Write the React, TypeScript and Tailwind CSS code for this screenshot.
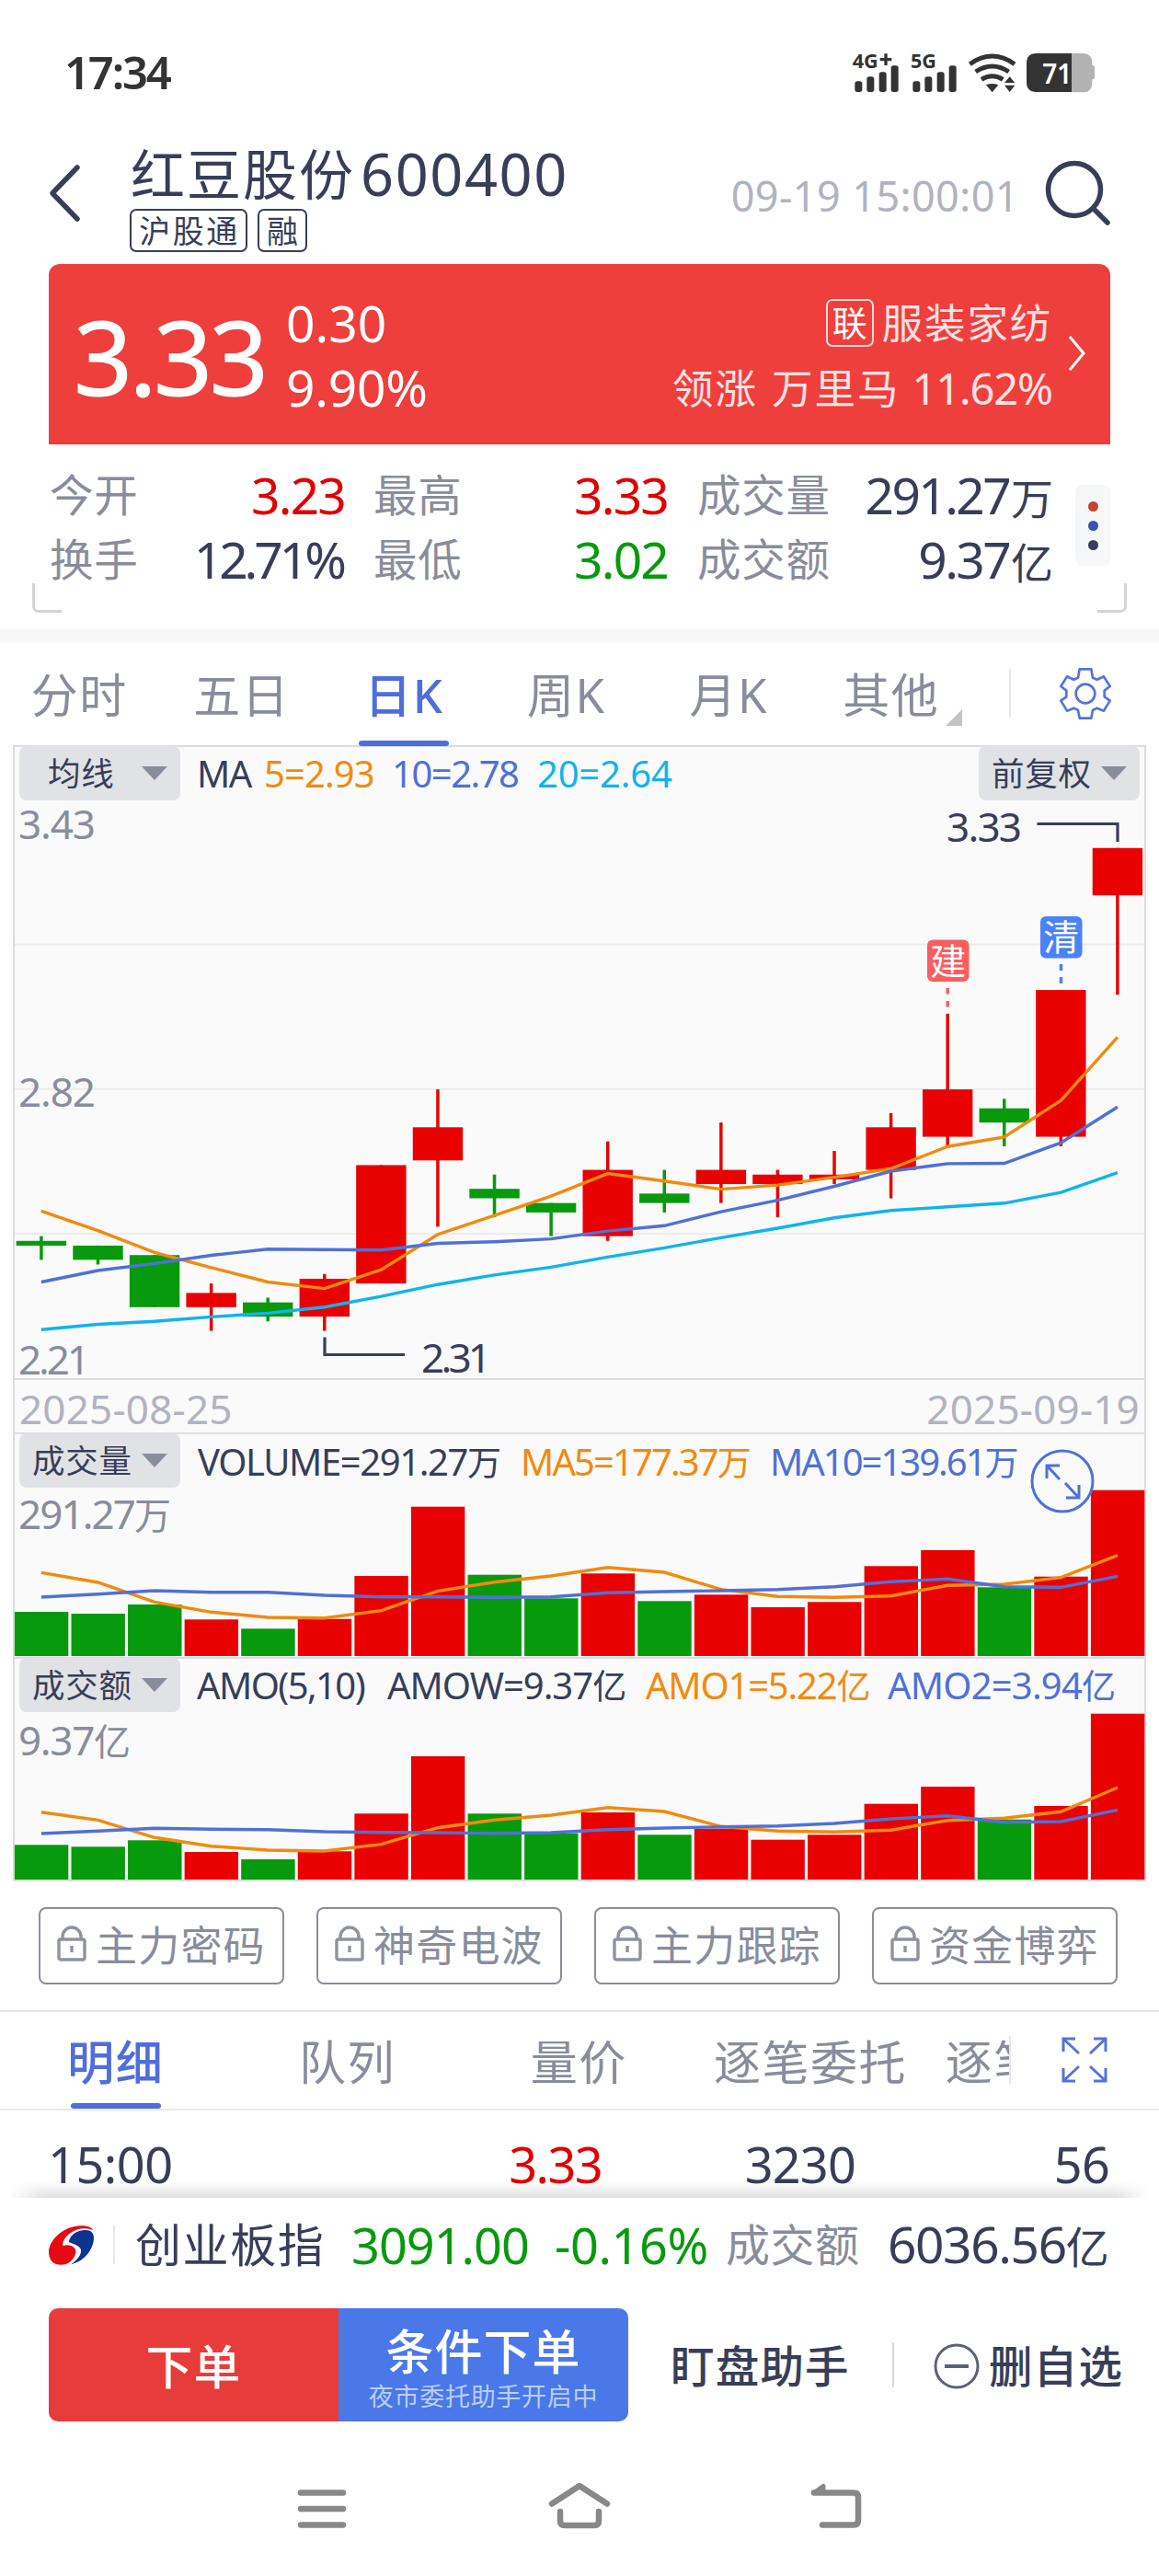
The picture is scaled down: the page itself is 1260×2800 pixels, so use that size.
import type React from "react"
import clsx from "clsx"

const PITCH = 61.58
const FIRST_X = 44.9

const xAt = (i: number) => FIRST_X + i * PITCH
const yAt = (price: number) => 870.3 + (3.43 - price) * 514.5

// open/close band, then high and low
type Candle = { up: boolean; top: number; bottom: number; high: number; low: number }

const candles: Candle[] = [
  { up: false, top: 2.5, bottom: 2.49, high: 2.51, low: 2.46 },
  { up: false, top: 2.49, bottom: 2.46, high: 2.49, low: 2.45 },
  { up: false, top: 2.47, bottom: 2.36, high: 2.47, low: 2.36 },
  { up: true, top: 2.39, bottom: 2.36, high: 2.41, low: 2.31 },
  { up: false, top: 2.37, bottom: 2.34, high: 2.38, low: 2.33 },
  { up: true, top: 2.42, bottom: 2.34, high: 2.43, low: 2.31 },
  { up: true, top: 2.66, bottom: 2.41, high: 2.66, low: 2.41 },
  { up: true, top: 2.74, bottom: 2.67, high: 2.82, low: 2.53 },
  { up: false, top: 2.61, bottom: 2.59, high: 2.64, low: 2.55 },
  { up: false, top: 2.58, bottom: 2.56, high: 2.58, low: 2.51 },
  { up: true, top: 2.65, bottom: 2.51, high: 2.71, low: 2.5 },
  { up: false, top: 2.6, bottom: 2.58, high: 2.65, low: 2.56 },
  { up: true, top: 2.65, bottom: 2.62, high: 2.75, low: 2.58 },
  { up: true, top: 2.64, bottom: 2.62, high: 2.65, low: 2.55 },
  { up: true, top: 2.64, bottom: 2.63, high: 2.69, low: 2.62 },
  { up: true, top: 2.74, bottom: 2.65, high: 2.77, low: 2.59 },
  { up: true, top: 2.82, bottom: 2.72, high: 2.98, low: 2.7 },
  { up: false, top: 2.78, bottom: 2.75, high: 2.8, low: 2.7 },
  { up: true, top: 3.03, bottom: 2.72, high: 3.03, low: 2.7 },
  { up: true, top: 3.33, bottom: 3.23, high: 3.33, low: 3.02 },
]

const ma5 = [1316.3, 1337.7, 1361.3, 1377.9, 1393.5, 1400.6, 1380.1, 1341.7, 1321.2, 1300.2, 1275.6, 1283.7, 1292.6, 1288.1, 1279.6, 1270.3, 1246.2, 1235.9, 1196.2, 1127.4]
const ma10 = [1393.5, 1381, 1373.4, 1364.5, 1357.8, 1358.2, 1358.7, 1351.5, 1349.7, 1346.6, 1338.1, 1332.3, 1317.1, 1304.6, 1289.5, 1273, 1264.9, 1264.5, 1242.1, 1203.3]
const ma20 = [1445.3, 1439.5, 1436.3, 1431.4, 1427.4, 1420.7, 1409.1, 1396.2, 1385.9, 1377.4, 1366.3, 1356.4, 1345.3, 1335, 1323.8, 1315.8, 1311.8, 1307.8, 1296.2, 1274.7]

const volumeTops = [1752, 1754, 1744, 1760.3, 1770.3, 1759.7, 1713, 1637.7, 1711.7, 1737.3, 1710.3, 1740.3, 1733.3, 1747, 1741.3, 1702.3, 1685, 1725.3, 1713.7, 1619.7]
const volumeMa5 = [1709.3, 1720, 1741.3, 1752.3, 1758, 1758.7, 1750.7, 1729.3, 1719.7, 1713, 1703.7, 1709, 1727.7, 1735.3, 1736.3, 1734.7, 1723.3, 1722, 1714.7, 1690.7]
const volumeMa10 = [1736, 1732.7, 1729, 1730.7, 1730.7, 1734, 1735.7, 1735.7, 1736.3, 1735.7, 1731.3, 1730, 1729, 1727.7, 1724.7, 1719.3, 1716.3, 1724.7, 1725.3, 1713.3]

const amountTops = [2005.3, 2007.3, 2000.3, 2013, 2021, 2012.3, 1971.3, 1909, 1971.3, 1992.7, 1970, 1994.3, 1987.7, 1999.7, 1994.3, 1960.7, 1942, 1977.7, 1963, 1862.7]
const amountMa5 = [1969.7, 1978.3, 1997.3, 2006.7, 2011, 2012, 2004.7, 1986.7, 1978.3, 1973, 1964.7, 1969, 1985.3, 1990.3, 1991.3, 1989.3, 1978.7, 1976.3, 1969.3, 1943]
const amountMa10 = [1993, 1990.3, 1987.3, 1988.3, 1988.7, 1991, 1991.7, 1992, 1992.7, 1992, 1988.7, 1987, 1985.7, 1984.7, 1982, 1977, 1973.7, 1980.7, 1980, 1967.3]

const RED = "#e90000"
const GREEN = "#079a0c"
const ORANGE = "#f28a0e"
const BLUE = "#5070d8"
const CYAN = "#10b4ec"

function Line({ data, color }: { data: number[]; color: string }) {
  return (
    <polyline
      points={data.map((y, i) => `${xAt(i)},${y}`).join(" ")}
      fill="none"
      stroke={color}
      strokeWidth="3.4"
    />
  )
}

function StatusBar() {
  return (
    <div className="h-[157px] pl-[70px] pr-[50px] flex items-center justify-between text-[#333]">
      <span className="text-[49px] leading-[60px] font-semibold tracking-[-2.2px] -mt-[2px]">17:34</span>
      <svg width="300" height="65" viewBox="0 0 900 195" fill="#333" fontWeight="700">
        <text x="50" y="84" fontSize="62" textLength="84" lengthAdjust="spacingAndGlyphs">4G</text>
        <path d="M140 56h38M159 37v38" stroke="#333" strokeWidth="10" />
        <text x="240" y="84" fontSize="62" textLength="84" lengthAdjust="spacingAndGlyphs">5G</text>
        {[58, 247].map((x) => (
          <g key={x}>
            <rect x={x} y="127" width="24" height="35" rx="8" />
            <rect x={x + 39} y="112" width="24" height="50" rx="8" />
            <rect x={x + 79} y="97" width="24" height="65" rx="8" />
            <rect x={x + 118} y="76" width="24" height="86" rx="8" />
          </g>
        ))}
        <g fill="none" stroke="#333" strokeWidth="15">
          <path d="M433 71Q506 19 579 71" />
          <path d="M452 96Q506 60 560 96" />
          <path d="M471 121Q506 99 541 121" />
        </g>
        <path d="M486 139q20-8 40 0l-20 24z" />
        <path d="M563 112l17 20h-34zM563 162l17-22h-34z" />
        <path d="M765 36h35q32 0 32 32v7q8 0 8 8v30q0 8-8 8v10q0 32-32 32h-35z" fill="#b2b2b2" />
        <path d="M765 36H650q-32 0-32 32v62q0 32 32 32h115z" />
        <text x="670" y="135" fontSize="94" fontWeight="600" fill="#fff" textLength="96" lengthAdjust="spacingAndGlyphs">71</text>
      </svg>
    </div>
  )
}

function Header() {
  return (
    <div className="h-[130px] pl-[52px] pr-[50px] flex items-start">
      <svg width="38" height="66" viewBox="0 0 38 66" className="mt-5" fill="none" stroke="#383e58" strokeWidth="5.5" strokeLinecap="round" strokeLinejoin="round">
        <path d="M32 5L5 33l27 28" />
      </svg>
      <div className="ml-[52px]">
        <div className="h-[70px] flex items-center leading-[64px] text-[#383e58] -mt-[3px]">
          <span className="text-[59px] tracking-[2px]">红豆股份</span>
          <span className="text-[63px] tracking-[1.6px] ml-[6px]">600400</span>
        </div>
        <div className="flex gap-[11px] mt-[3px] -ml-px text-[34px] leading-[45px] text-[#383e58]">
          <span className="w-[128px] h-[47px] border-2 border-[#383e58] rounded-[7px] text-center tracking-[2.5px] pl-[2px]">沪股通</span>
          <span className="w-[54px] h-[47px] border-2 border-[#383e58] rounded-[7px] text-center">融</span>
        </div>
      </div>
      <div className="ml-auto flex pt-4">
        <span className="text-[45px] leading-[80px] tracking-[0.4px] text-[#b1b3be] mr-[26px]">09-19 15:00:01</span>
        <svg width="76" height="76" viewBox="0 0 76 76" fill="none" stroke="#383e58" strokeWidth="5.5" strokeLinecap="round">
          <circle cx="34" cy="33" r="28.5" />
          <path d="M55 54l15 15" />
        </svg>
      </div>
    </div>
  )
}

function PriceCard() {
  return (
    <div className="mx-[53px] h-[196px] bg-[#ee3f3d] rounded-t-[12px] text-white flex pl-[27px]">
      <span className="text-[112px] leading-[200px] tracking-[-3.5px] w-[231px] [-webkit-text-stroke:1px_white]">3.33</span>
      <div className="pt-[29px] text-[55px] leading-[70px]">
        <div>0.30</div>
        <div className="tracking-[-0.2px]">9.90%</div>
      </div>
      <div className="ml-auto pt-[29px] text-right text-white/85">
        <div className="flex items-center justify-end h-[70px]">
          <span className="w-[52px] h-[52px] border-2 border-white/80 rounded-[7px] text-[38px] leading-[47px] text-center text-white mr-[9px]">联</span>
          <span className="text-[44.5px] tracking-[1.8px] leading-[70px]">服装家纺</span>
        </div>
        <div className="flex justify-end leading-[72px] text-[44.5px]">
          <span className="tracking-[2px] mr-[15px]">领涨</span>
          <span className="tracking-[2px] mr-[13px]">万里马</span>
          <span className="text-[47px] tracking-[-1.1px]">11.62%</span>
        </div>
      </div>
      <svg width="20" height="40" viewBox="0 0 20 40" className="mt-[77px] ml-[17px] mr-[26px]" fill="none" stroke="#fff" strokeWidth="3">
        <path d="M2 2l15 18L2 38" />
      </svg>
    </div>
  )
}

type StatProps = {
  label: string
  value: string
  unit?: string
  valueClass?: string
  labelWidth: string
  valueWidth: string
}

function Stat({ label, value, unit, valueClass = "text-[#383e58] tracking-[-2.6px]", labelWidth, valueWidth }: StatProps) {
  return (
    <div className="flex h-[70px] leading-[70px]">
      <span className={clsx("text-[47.5px] tracking-[0.8px] text-[#898d9b]", labelWidth)}>{label}</span>
      <span className={clsx("text-right text-[55px]", valueClass, valueWidth)}>
        {value}
        {unit && <span className="text-[46px] ml-[2px] tracking-normal">{unit}</span>}
      </span>
    </div>
  )
}

function Stats() {
  return (
    <div className="h-[201px] relative pl-[54px] pr-[53px] pt-[20px] flex">
      <div>
        <Stat label="今开" value="3.23" valueClass="text-[#e00000] tracking-[-1.8px]" labelWidth="w-[122px]" valueWidth="w-[199px]" />
        <Stat label="换手" value="12.71%" valueClass="text-[#383e58] tracking-[-4px]" labelWidth="w-[122px]" valueWidth="w-[197px]" />
      </div>
      <div className="absolute left-[406px] top-[20px]">
        <Stat label="最高" value="3.33" valueClass="text-[#e00000] tracking-[-1.8px]" labelWidth="w-[120px]" valueWidth="w-[200px]" />
        <Stat label="最低" value="3.02" valueClass="text-[#079a0c] tracking-[-1.8px]" labelWidth="w-[120px]" valueWidth="w-[200px]" />
      </div>
      <div className="absolute left-[758px] top-[20px]">
        <Stat label="成交量" value="291.27" unit="万" labelWidth="w-[150px]" valueWidth="w-[237px]" />
        <Stat label="成交额" value="9.37" unit="亿" labelWidth="w-[150px]" valueWidth="w-[237px]" />
      </div>
      <div className="ml-auto mt-[24px] w-[38px] h-[88px] rounded-[8px] bg-[#f5f7f8] flex flex-col items-center justify-center gap-[10px]">
        <i className="size-[11px] rounded-full bg-[#c4432e]" />
        <i className="size-[11px] rounded-full bg-[#3a52b5]" />
        <i className="size-[11px] rounded-full bg-[#3a405c]" />
      </div>
      <i className="absolute left-[35px] top-[151px] w-[32px] h-[32px] border-l-3 border-b-3 border-[#d4d4da] rounded-bl-[7px]" />
      <i className="absolute right-[35px] top-[151px] w-[32px] h-[32px] border-r-3 border-b-3 border-[#d4d4da] rounded-br-[7px]" />
    </div>
  )
}

const periods = ["分时", "五日", "日K", "周K", "月K", "其他"]

function PeriodTabs() {
  return (
    <div className="h-[112px] flex pr-[52px]">
      <div className="w-[1059px] -ml-[2px] grid grid-cols-6">
        {periods.map((name) => {
          const active = name === "日K"
          return (
            <div
              key={name}
              className={clsx(
                "relative text-center text-[51px] leading-[114px] tracking-[1.5px]",
                active ? "text-[#4f6edc] font-medium" : "text-[#898d9b]",
              )}
            >
              {name}
              {active && <i className="absolute bottom-px left-[39px] w-[98px] h-[6px] rounded-[3px] bg-[#4f6edc]" />}
              {name === "其他" && (
                <svg width="18" height="18" className="absolute left-[147px] top-[73px]" fill="#c3c3c3">
                  <path d="M18 0v18H0z" />
                </svg>
              )}
            </div>
          )
        })}
      </div>
      <i className="w-[2px] h-[53px] bg-[#e8e8e8] mt-[29px] ml-[40px]" />
      <svg width="56" height="56" viewBox="0 0 168 168" className="ml-auto mt-[28px]" fill="none" stroke="#5573dc" strokeWidth="8" strokeLinejoin="round">
        <path d="M65 4H103L108 32L122 38L144 28L164 60L146 74V94L164 107L144 140L122 131L108 138L103 164H65L60 138L46 131L24 140L4 107L22 94V74L4 60L24 28L46 38L60 32Z" />
        <circle cx="84" cy="84" r="31" />
      </svg>
    </div>
  )
}

function Picker({ children, className }: { children: string; className: string }) {
  return (
    <div className={clsx("w-[175px] h-[59px] -mt-px rounded-[8px] bg-[#e1e2e6] flex items-center text-[35.5px] leading-[59px] tracking-[0.8px] text-[#383e58]", className)}>
      {children}
      <svg width="28" height="15" className="ml-auto" fill="#898d9b">
        <path d="M0 0h28L14 15z" />
      </svg>
    </div>
  )
}

type LegendProps = { className: string; unit?: string; children: string }

function Legend({ className, unit, children }: LegendProps) {
  return (
    <span className={clsx("shrink-0 whitespace-nowrap text-[40px] leading-[57px]", className)}>
      {children}
      {unit && <span className="text-[37px]">{unit}</span>}
    </span>
  )
}

function PriceChart() {
  return (
    <svg width="1228" height="628" viewBox="16 870 1228 628" className="block overflow-visible">
      {[1026.5, 1183.8, 1341].map((y) => (
        <path key={y} d={`M16 ${y}H1244`} stroke="#ececee" strokeWidth="2" />
      ))}
      <g fontSize="44" fill="#898d9b">
        <text x="20" y="912" textLength="84">3.43</text>
        <text x="20" y="1203" textLength="84">2.82</text>
        <text x="20" y="1494" textLength="78">2.21</text>
      </g>
      {candles.map((c, i) => (
        <g key={i} fill={c.up ? RED : GREEN}>
          <rect x={xAt(i) - 27.2} y={yAt(c.top)} width="54.4" height={yAt(c.bottom) - yAt(c.top)} />
          <rect x={xAt(i) - 1.75} y={yAt(c.high)} width="3.5" height={yAt(c.low) - yAt(c.high)} />
        </g>
      ))}
      <Line data={ma20} color={CYAN} />
      <Line data={ma5} color={ORANGE} />
      <Line data={ma10} color={BLUE} />

      {/* highest and lowest price in view */}
      <g fill="none" stroke="#383e58" strokeWidth="3.2">
        <path d="M1127.5 895.5H1215V915" />
        <path d="M353 1453.5V1472.5H440" />
      </g>
      <g fontSize="44" fill="#383e58">
        <text x="1029" y="914.5" textLength="82">3.33</text>
        <text x="458" y="1491.5" textLength="76">2.31</text>
      </g>

      {/* open / close position markers */}
      <rect x="1008" y="1021.5" width="45.5" height="45.5" rx="6" fill="#fa5e5e" />
      <text x="1030.7" y="1058.5" fontSize="39" fill="#fff" textAnchor="middle">建</text>
      <path d="M1030.3 1074v6.5M1030.3 1088v6.5" stroke="#fa5e5e" strokeWidth="3.5" />
      <rect x="1131" y="996" width="45.5" height="45.5" rx="6" fill="#4b82f8" />
      <text x="1153.7" y="1033" fontSize="39" fill="#fff" textAnchor="middle">清</text>
      <path d="M1153.5 1048v7M1153.5 1062v7" stroke="#4b82f8" strokeWidth="3.5" />
    </svg>
  )
}

type BarChartProps = {
  top: number
  height: number
  base: number
  bars: number[]
  fast: number[]
  slow: number[]
  children: React.ReactNode
}

function BarChart({ top, height, base, bars, fast, slow, children }: BarChartProps) {
  return (
    <svg width="1228" height={height} viewBox={`16 ${top} 1228 ${height}`} className="block overflow-visible">
      {children}
      {bars.map((y, i) => (
        <rect key={i} x={xAt(i) - 29} y={y} width="58.4" height={base - y} fill={candles[i].up ? RED : GREEN} />
      ))}
      <Line data={fast} color={ORANGE} />
      <Line data={slow} color={BLUE} />
    </svg>
  )
}

function Charts() {
  return (
    <div className="mx-[14px] bg-[#fafafa] border-2 border-[#dcdce1]">
      <div className="h-[58px] flex pl-[5px] pr-[5px]">
        <Picker className="pl-[31px] pr-[14px]">均线</Picker>
        <Legend className="ml-[18px] w-[73px] tracking-[-1.5px] text-[#383e58]">MA</Legend>
        <Legend className="w-[139px] tracking-[-0.9px] text-[#f28a0e]">5=2.93</Legend>
        <Legend className="w-[158px] tracking-[-1.5px] text-[#5070d8]">10=2.78</Legend>
        <Legend className="tracking-[-0.2px] text-[#10b4ec]">20=2.64</Legend>
        <Picker className="ml-auto pl-[14px] pr-[14px]">前复权</Picker>
      </div>
      <PriceChart />
      <div className="h-[59px] border-t-2 border-[#dcdce1] flex justify-between px-[5px] text-[44px] leading-[63px] tracking-[0.2px] text-[#b1b3be]">
        <span>2025-08-25</span>
        <span>2025-09-19</span>
      </div>

      <div className="relative h-[62px] border-t-2 border-[#dcdce1] flex pl-[5px]">
        <Picker className="pl-[14px] pr-[14px]">成交量</Picker>
        <Legend className="ml-[19px] w-[351px] pt-px tracking-[-1.4px] text-[#383e58]" unit="万">VOLUME=291.27</Legend>
        <Legend className="w-[271px] pt-px tracking-[-1.9px] text-[#f28a0e]" unit="万">MA5=177.37</Legend>
        <Legend className="pt-px tracking-[-2px] text-[#5070d8]" unit="万">MA10=139.61</Legend>
        <svg width="70" height="70" viewBox="0 0 70 70" className="absolute left-[1104px] top-[16px]" fill="none" stroke="#5070d8" strokeWidth="3">
          <circle cx="35" cy="35" r="33" />
          <path d="M32 33L19 19M18 32V18h14M38 37l14 15M39 53h14V39" />
        </svg>
      </div>
      <BarChart top={1619} height={182} base={1800} bars={volumeTops} fast={volumeMa5} slow={volumeMa10}>
        <text x="20" y="1662" fontSize="44" fill="#898d9b" textLength="166">291.27<tspan fontSize="40">万</tspan></text>
      </BarChart>

      <div className="h-[60px] border-t-2 border-[#dcdce1] flex pl-[5px]">
        <Picker className="pl-[14px] pr-[14px]">成交额</Picker>
        <Legend className="ml-[18px] w-[207px] tracking-[-1.6px] text-[#383e58]">AMO(5,10)</Legend>
        <Legend className="w-[281px] tracking-[-1px] text-[#383e58]" unit="亿">AMOW=9.37</Legend>
        <Legend className="w-[263px] tracking-[-1.2px] text-[#f28a0e]" unit="亿">AMO1=5.22</Legend>
        <Legend className="tracking-[-0.8px] text-[#5070d8]" unit="亿">AMO2=3.94</Legend>
      </div>
      <BarChart top={1861} height={182} base={2043} bars={amountTops} fast={amountMa5} slow={amountMa10}>
        <text x="20" y="1908" fontSize="44" fill="#898d9b" textLength="122">9.37<tspan fontSize="40">亿</tspan></text>
      </BarChart>
    </div>
  )
}

function LockedTools() {
  return (
    <div className="h-[140px] pt-[28px] px-[42px] flex gap-[35px]">
      {["主力密码", "神奇电波", "主力跟踪", "资金博弈"].map((name) => (
        <div key={name} className="w-[267px] h-[84px] border-2 border-[#8a8e9c] rounded-[8px] flex items-center pl-[18px] text-[#898d9b]">
          <svg width="32" height="40" viewBox="0 0 32 40" fill="none" stroke="#8f93a0" strokeWidth="3.4" className="mr-[10px] -mt-[4px]">
            <rect x="2" y="15" width="28" height="22" rx="2" />
            <path d="M6 15v-3a10 10 0 0 1 20 0v3M16 22v7" />
          </svg>
          <span className="text-[45px] leading-[80px] tracking-[1.2px] whitespace-nowrap">{name}</span>
        </div>
      ))}
    </div>
  )
}

function DetailTabs() {
  return (
    <div className="h-[109px] border-y-2 border-[#e8e8ea] flex">
      <div className="w-[1099px] overflow-hidden flex relative">
        {["明细", "队列", "量价", "逐笔委托", "逐笔成交"].map((name, i) => (
          <div
            key={name}
            className={clsx(
              "w-[251.75px] shrink-0 relative text-center text-[51px] leading-[109px] tracking-[1.5px]",
              i === 0 ? "text-[#4f6edc] font-medium" : "text-[#898d9b]",
            )}
          >
            {name}
            {i === 0 && <i className="absolute bottom-0 left-[77px] w-[98px] h-[6px] rounded-[3px] bg-[#4f6edc]" />}
          </div>
        ))}
        <i className="absolute right-0 top-[26px] w-[2px] h-[53px] bg-[#e8e8e8]" />
      </div>
      <svg width="50" height="50" viewBox="0 0 50 50" className="ml-[55px] mt-[27px]" fill="none" stroke="#5573dc" strokeWidth="3">
        <path d="M19 18L3 3M2 16V2h13M31 18L47 3M35 2h13v14M19 32L3 47M2 34v14h13M31 32l16 15M35 48h13V34" />
      </svg>
    </div>
  )
}

function TradeRow() {
  return (
    <div className="h-[95px] flex pl-[52px] text-[54px] leading-[117px] text-[#383e58]">
      <span className="w-[400px] tracking-[-0.5px]">15:00</span>
      <span className="w-[202px] text-right tracking-[-1.6px] text-[#e00000]">3.33</span>
      <span className="w-[276px] text-right tracking-[-0.8px]">3230</span>
      <span className="w-[276px] text-right tracking-[-0.8px]">56</span>
    </div>
  )
}

function IndexBar() {
  return (
    <div className="relative">
      <i className="absolute left-[10px] right-[10px] -top-[18px] h-[18px] bg-linear-to-b from-black/0 to-black/12 mask-x-from-97%" />
      <div className="relative h-[120px] pb-[18px] bg-white flex items-center pl-[53px] leading-[100px] text-[#383e58]">
        <svg width="49" height="43" viewBox="0 0 146 127">
          <path d="M0 85C0 50 45 0 105 0C125 0 140 6 143 14C120 6 95 8 80 18C60 28 42 48 46 66C62 58 88 66 88 85C84 108 65 127 40 127C12 127 0 108 0 85Z" fill="#e60a14" />
          <path d="M146 40C146 75 115 118 72 125C92 112 108 92 104 76C98 62 78 60 65 52C68 34 85 18 110 15C135 12 146 22 146 40Z" fill="#0a3490" />
        </svg>
        <i className="w-[2px] h-[42px] bg-[#e8e8e8] ml-[21px] mr-[22px]" />
        <span className="w-[235px] text-[50px] tracking-[1.6px]">创业板指</span>
        <span className="w-[221px] text-[54px] tracking-[-1px] text-[#079a0c]">3091.00</span>
        <span className="w-[186px] text-[54px] tracking-[-0.4px] text-[#079a0c]">-0.16%</span>
        <span className="w-[176px] text-[48px] tracking-[0.5px] text-[#898d9b]">成交额</span>
        <span className="text-[55px] tracking-[-1.4px] whitespace-nowrap">
          6036.56<span className="text-[47px]">亿</span>
        </span>
      </div>
    </div>
  )
}

function OrderBar() {
  return (
    <div className="h-[123px] pl-[53px] flex items-center text-[#383e58]">
      <div className="w-[630px] h-[123px] rounded-[10px] overflow-hidden flex text-white font-medium text-center">
        <div className="w-[315px] bg-[#e83c3a] text-[51px] leading-[126px] tracking-[1px]">下单</div>
        <div className="w-[315px] bg-[#4a78e9] pt-[13px]">
          <div className="text-[52px] leading-[68px] tracking-[1px]">条件下单</div>
          <div className="text-[27px] leading-[30px] tracking-[0.7px] font-normal text-[#b9cdf7]">夜市委托助手开启中</div>
        </div>
      </div>
      <span className="ml-[46px] w-[241px] text-[47.5px] leading-[123px] tracking-[1.2px] font-medium pt-[2px]">盯盘助手</span>
      <i className="w-[2px] h-[49px] bg-[#d8d8d8]" />
      <svg width="50" height="50" viewBox="0 0 50 50" className="ml-[43px] mr-[10px] mt-[3px]" fill="none" stroke="#5c6178" strokeWidth="3">
        <circle cx="25" cy="25" r="23" />
        <path d="M12 25h26" strokeWidth="4" />
      </svg>
      <span className="text-[47.5px] leading-[123px] tracking-[1.2px] font-medium pt-[2px]">删自选</span>
    </div>
  )
}

function SystemNav() {
  return (
    <div className="h-[168px] pt-[64px] px-[322px] flex justify-between">
      <svg width="56" height="56" fill="none" stroke="#888" strokeWidth="6.5" strokeLinecap="round">
        <path d="M5 13.5h46M5 31h46M5 48.5h46" />
      </svg>
      <svg width="70" height="56" className="ml-1" fill="none" stroke="#888" strokeWidth="6.5" strokeLinecap="round" strokeLinejoin="round">
        <path d="M5 25.5L35 6l30 19.5" />
        <path d="M14 34v10q0 5 5 5h32q5 0 5-5V34" />
      </svg>
      <svg width="60" height="56" fill="none" stroke="#888" strokeWidth="6.5" strokeLinecap="round" strokeLinejoin="round">
        <path d="M7 13.5h43q5 0 5 5v25q0 5-5 5H16" />
        <path d="M7 13.5l10-7v7z" fill="#888" strokeWidth="5" />
      </svg>
    </div>
  )
}

export default function App() {
  return (
    <div className="w-[1260px] h-[2800px] bg-white overflow-hidden font-['Noto_Sans','Noto_Sans_CJK_SC',sans-serif]">
      <StatusBar />
      <Header />
      <PriceCard />
      <Stats />
      <div className="h-[14px] bg-[#f6f6f9]" />
      <PeriodTabs />
      <Charts />
      <LockedTools />
      <DetailTabs />
      <TradeRow />
      <IndexBar />
      <OrderBar />
      <SystemNav />
    </div>
  )
}
